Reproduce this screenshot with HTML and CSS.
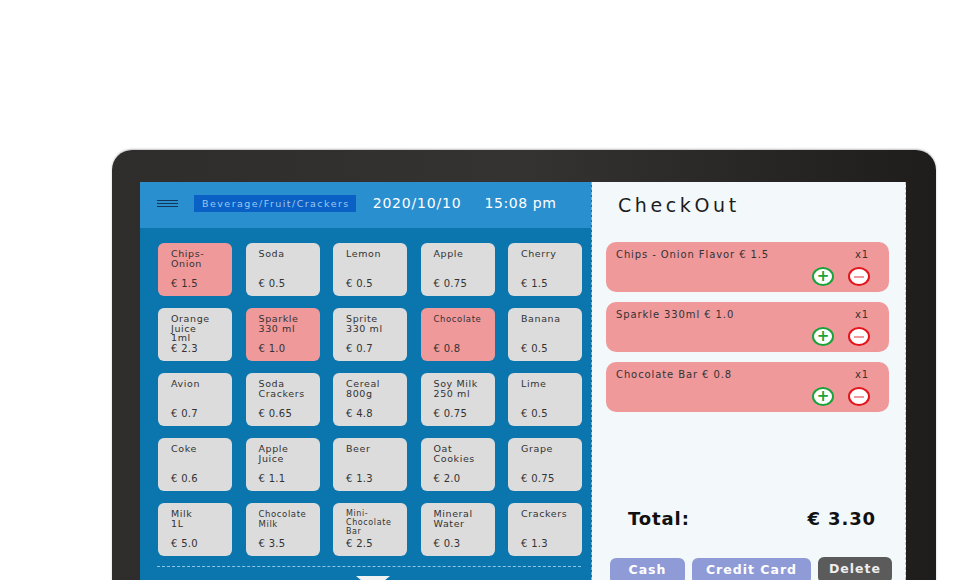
FILE: index.html
```html
<!DOCTYPE html>
<html lang="en">
<head>
  <meta charset="UTF-8" />
  <meta name="viewport" content="width=device-width, initial-scale=1.0" />
  <title>POS CheckOut</title>
  <link rel="stylesheet" href="styles.css">
</head>
<body>
  <div class="monitor">
    <div class="screen">
      <div class="menu">
        <div class="topbar">
          <div class="burger"><span></span><span></span><span></span></div>
          <div class="category">Beverage/Fruit/Crackers</div>
          <div class="date">2020/10/10</div>
          <div class="time">15:08 pm</div>
        </div>

        <div class="grid">
          <div class="tile picked"><div class="name">Chips-<br>Onion</div><div class="price">€ 1.5</div></div>
          <div class="tile"><div class="name">Soda</div><div class="price">€ 0.5</div></div>
          <div class="tile"><div class="name">Lemon</div><div class="price">€ 0.5</div></div>
          <div class="tile"><div class="name">Apple</div><div class="price">€ 0.75</div></div>
          <div class="tile"><div class="name">Cherry</div><div class="price">€ 1.5</div></div>

          <div class="tile"><div class="name">Orange<br>Juice<br>1ml</div><div class="price">€ 2.3</div></div>
          <div class="tile picked"><div class="name">Sparkle<br>330 ml</div><div class="price">€ 1.0</div></div>
          <div class="tile"><div class="name">Sprite<br>330 ml</div><div class="price">€ 0.7</div></div>
          <div class="tile picked"><div class="name small">Chocolate</div><div class="price">€ 0.8</div></div>
          <div class="tile"><div class="name">Banana</div><div class="price">€ 0.5</div></div>

          <div class="tile"><div class="name">Avion</div><div class="price">€ 0.7</div></div>
          <div class="tile"><div class="name">Soda<br>Crackers</div><div class="price">€ 0.65</div></div>
          <div class="tile"><div class="name">Cereal<br>800g</div><div class="price">€ 4.8</div></div>
          <div class="tile"><div class="name">Soy Milk<br>250 ml</div><div class="price">€ 0.75</div></div>
          <div class="tile"><div class="name">Lime</div><div class="price">€ 0.5</div></div>

          <div class="tile"><div class="name">Coke</div><div class="price">€ 0.6</div></div>
          <div class="tile"><div class="name">Apple<br>Juice</div><div class="price">€ 1.1</div></div>
          <div class="tile"><div class="name">Beer</div><div class="price">€ 1.3</div></div>
          <div class="tile"><div class="name">Oat<br>Cookies</div><div class="price">€ 2.0</div></div>
          <div class="tile"><div class="name">Grape</div><div class="price">€ 0.75</div></div>

          <div class="tile"><div class="name">Milk<br>1L</div><div class="price">€ 5.0</div></div>
          <div class="tile"><div class="name small">Chocolate<br>Milk</div><div class="price">€ 3.5</div></div>
          <div class="tile"><div class="name tiny">Mini-<br>Chocolate<br>Bar</div><div class="price">€ 2.5</div></div>
          <div class="tile"><div class="name">Mineral<br>Water</div><div class="price">€ 0.3</div></div>
          <div class="tile"><div class="name">Crackers</div><div class="price">€ 1.3</div></div>
        </div>

        <div class="more">
          <div class="arrow"></div>
        </div>
      </div>

      <div class="checkout">
        <h2>CheckOut</h2>

        <div class="order">
          <div class="line"><span>Chips - Onion Flavor € 1.5</span><span>x1</span></div>
          <div class="qty"><span class="plus">+</span><span class="minus"></span></div>
        </div>
        <div class="order">
          <div class="line"><span>Sparkle 330ml € 1.0</span><span>x1</span></div>
          <div class="qty"><span class="plus">+</span><span class="minus"></span></div>
        </div>
        <div class="order">
          <div class="line"><span>Chocolate Bar € 0.8</span><span>x1</span></div>
          <div class="qty"><span class="plus">+</span><span class="minus"></span></div>
        </div>

        <div class="total"><span>Total:</span><span>€ 3.30</span></div>

        <div class="actions">
          <button class="pay cash">Cash</button>
          <button class="pay card">Credit Card</button>
          <button class="del">Delete</button>
        </div>
      </div>
    </div>
  </div>
</body>
</html>
```

FILE: styles.css
```css
html, body {
  margin: 0;
  height: 580px;
  overflow: hidden;
  background: #fff;
  font-family: "DejaVu Sans", sans-serif;
}
.monitor {
  margin: 150px 0 0 112px;
  width: 824px;
  height: 470px;
  box-sizing: border-box;
  padding: 32px 30px 0 28px;
  border-radius: 20px 20px 0 0;
  background: linear-gradient(90deg, #2f2d2c 0%, #353331 50%, #1f1d1c 100%);
  box-shadow: 0 -1px 2px rgba(0,0,0,.25);
}
.screen {
  display: flex;
  height: 438px;
}

/* left side: menu */
.menu {
  width: 452px;
  background: #0b76ad;
  border-right: 1px dashed #6fb6dd;
  box-sizing: border-box;
}
.topbar {
  height: 46px;
  background: #2a8fcf;
  display: flex;
  align-items: center;
  padding-left: 17px;
  color: #fff;
}
.burger {
  width: 21px;
  display: flex;
  flex-direction: column;
  gap: 1.5px;
  margin-top: -3px;
}
.burger span {
  height: 1.5px;
  background: #12365a;
}
.category {
  margin-left: 16px;
  background: #0b60c6;
  color: #9cc8f0;
  font-size: 9.5px;
  letter-spacing: 1.45px;
  padding: 3px 6px 3px 8px;
  height: 11px;
  line-height: 11px;
  margin-top: -4px;
}
.date {
  margin-left: 17px;
  font-size: 14px;
  letter-spacing: 0.8px;
  margin-top: -4px;
}
.time {
  margin-left: 23px;
  font-size: 14px;
  letter-spacing: 0.6px;
  margin-top: -4px;
}
.grid {
  display: grid;
  grid-template-columns: repeat(5, 74px);
  grid-auto-rows: 53px;
  column-gap: 13.5px;
  row-gap: 12px;
  padding: 15px 0 0 18px;
}
.tile {
  background: #dcdcdc;
  border-radius: 6px;
  padding: 6px 6px 6px 13px;
  display: flex;
  flex-direction: column;
  justify-content: space-between;
  color: #333;
  box-sizing: border-box;
}
.tile.picked {
  background: #ef999b;
}
.name {
  font-size: 9.5px;
  line-height: 9.5px;
  letter-spacing: 0.6px;
}
.name.small {
  font-size: 8.5px;
  line-height: 10px;
}
.name.tiny {
  font-size: 8px;
  line-height: 9px;
}
.price {
  font-size: 10px;
  line-height: 12px;
  letter-spacing: 0.3px;
}
.more {
  margin: 10px 10px 0 17px;
  border-top: 1px dashed #8fc6e6;
  display: flex;
  justify-content: center;
}
.arrow {
  width: 0;
  height: 0;
  margin-top: 9px;
  margin-left: 8px;
  border-left: 17px solid transparent;
  border-right: 17px solid transparent;
  border-top: 14px solid #f2f2f2;
}

/* right side: checkout */
.checkout {
  width: 314px;
  background: #f3f8fb;
  border-right: 1px dashed #a9cde6;
  box-sizing: border-box;
  padding: 0 16px 0 14px;
}
.checkout h2 {
  margin: 12px 0 26px 12px;
  font-weight: normal;
  font-size: 19px;
  letter-spacing: 3.6px;
  color: #1d1d1d;
}
.order {
  background: #f0999b;
  border-radius: 10px;
  height: 50px;
  margin-bottom: 10px;
  padding: 7px 20px 0 10px;
  box-sizing: border-box;
  color: #333;
}
.line {
  display: flex;
  justify-content: space-between;
  font-size: 10px;
  letter-spacing: 0.9px;
}
.qty {
  display: flex;
  justify-content: flex-end;
  gap: 14px;
  margin-top: 7px;
  margin-right: -1px;
}
.qty span {
  width: 18px;
  height: 15px;
  border-radius: 50%;
  background: #fff;
  display: flex;
  align-items: center;
  justify-content: center;
}
.plus {
  border: 2px solid #1aa33a;
  color: #1aa33a;
  font-size: 15px;
  font-weight: bold;
  line-height: 15px;
}
.minus {
  border: 2px solid #e3141a;
}
.minus::before {
  content: "";
  width: 10px;
  height: 2px;
  background: #f0999b;
}
.total {
  display: flex;
  justify-content: space-between;
  margin: 96px 13px 0 22px;
  font-size: 18px;
  font-weight: bold;
  letter-spacing: 0.9px;
  color: #111;
}
.actions {
  display: flex;
  gap: 7px;
  margin: 29px -8px 0 4px;
}
.actions button {
  flex-shrink: 0;
  border: none;
  border-radius: 6px;
  height: 26px;
  padding: 0 0 4px;
  color: #fff;
  font-family: "DejaVu Sans", sans-serif;
  font-weight: bold;
  font-size: 12.5px;
  letter-spacing: 1px;
  cursor: pointer;
}
.pay {
  background: #8f9bd7;
}
.cash {
  width: 75px;
}
.card {
  width: 119px;
}
.del {
  width: 74px;
  background: #5b5b5b;
  margin-top: -1px;
  color: #eee !important;
}
```
